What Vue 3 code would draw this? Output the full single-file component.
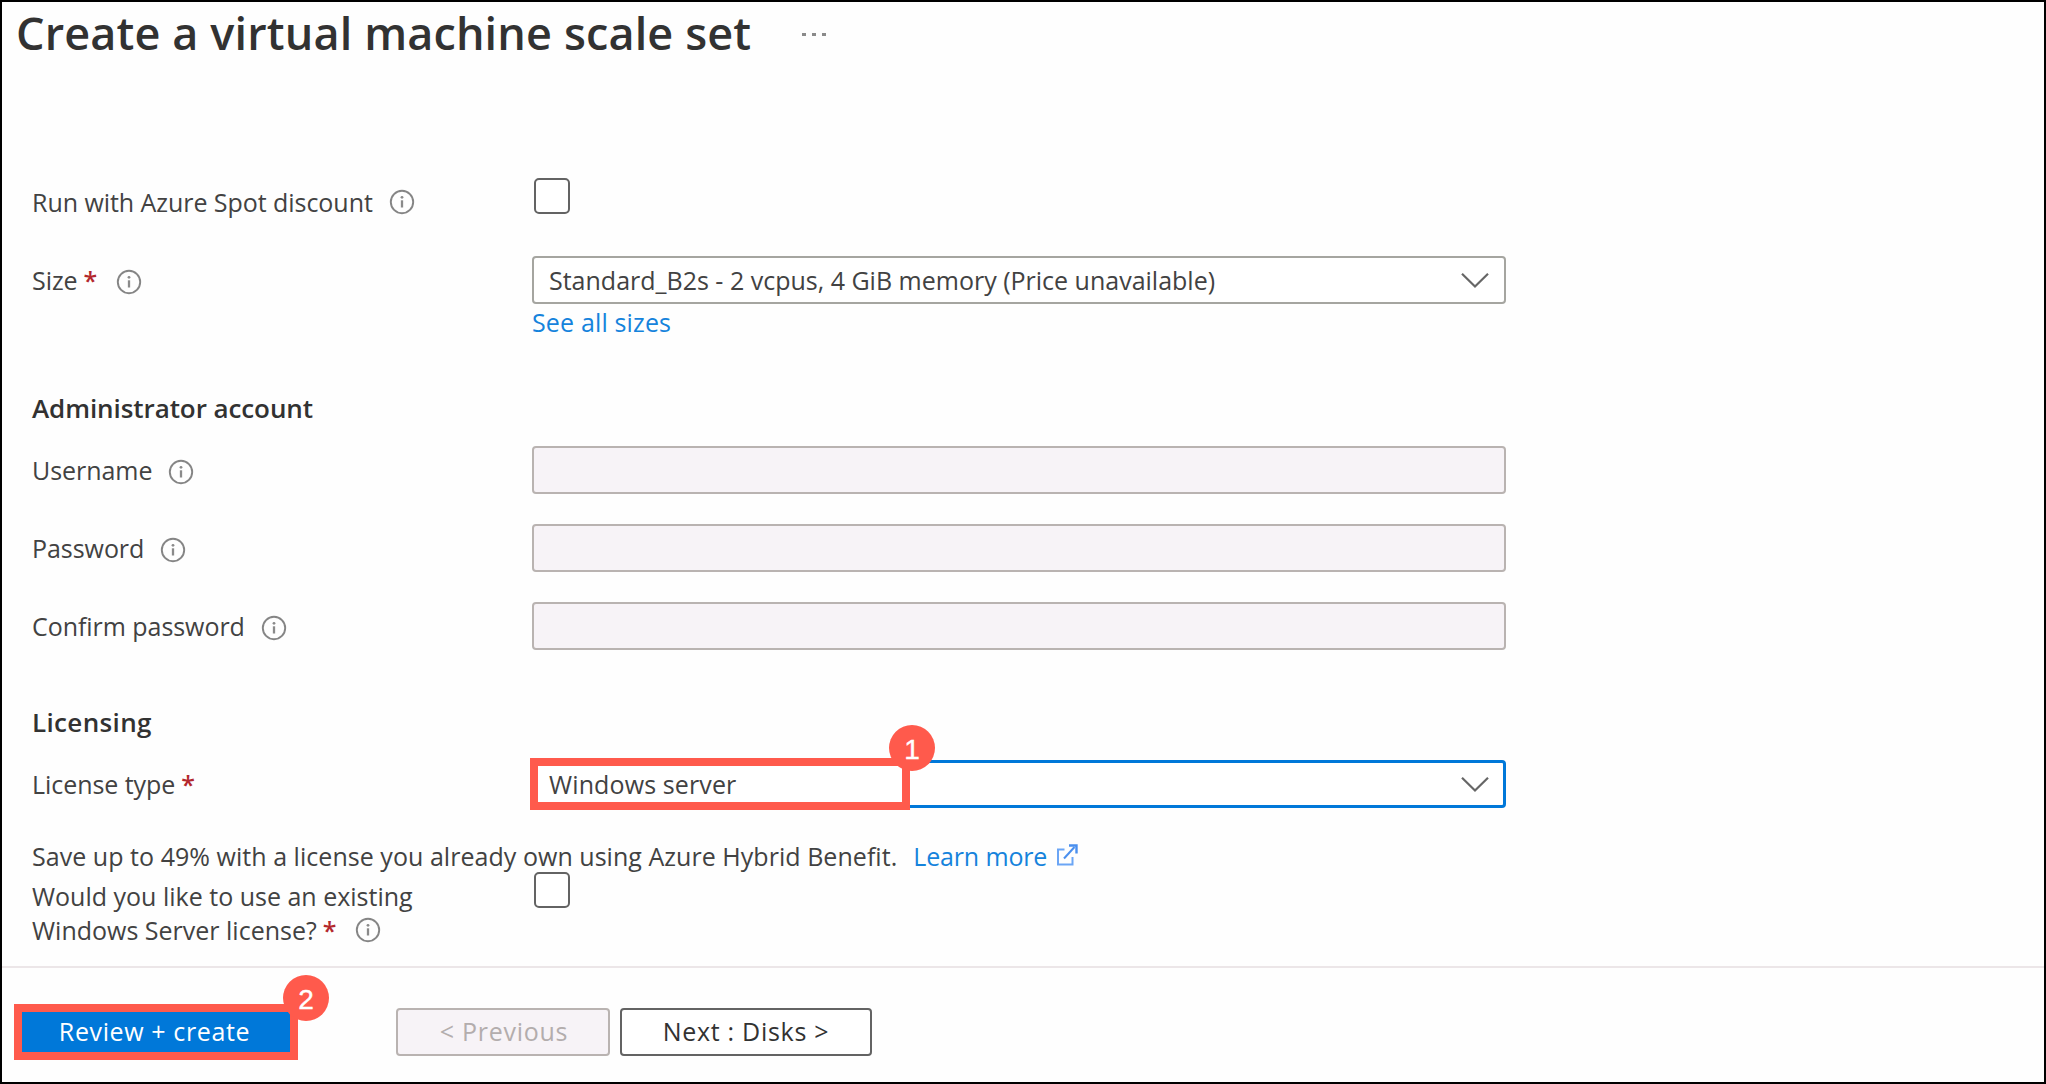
<script setup>
import { h } from 'vue'

const InfoIcon = () =>
  h('svg', { width: 26, height: 26, viewBox: '0 0 26 26', fill: 'none', style: 'display:block;flex:none' }, [
    h('circle', { cx: 13, cy: 13, r: 11.2, stroke: '#858585', 'stroke-width': 1.9 }),
    h('circle', { cx: 13, cy: 8.3, r: 1.4, fill: '#8a8a8a' }),
    h('path', { d: 'M13 11.3v7.2', stroke: '#8a8a8a', 'stroke-width': 2.3 }),
  ])

const Chevron = () =>
  h('svg', { width: 30, height: 18, viewBox: '0 0 30 18', fill: 'none', style: 'display:block;flex:none' }, [
    h('path', { d: 'M2 2.7 15 15.5 28 2.7', stroke: '#666', 'stroke-width': 2.2 }),
  ])

const credentials = ['Username', 'Password', 'Confirm password']
</script>

<template>
  <div class="page">
    <header class="header">
      <h1>Create a virtual machine scale set</h1>
      <div class="more"><i></i><i></i><i></i></div>
    </header>

    <main class="form">
      <div class="row spot">
        <div class="label"><span>Run with Azure Spot discount</span><InfoIcon class="info" /></div>
        <div class="checkbox"></div>
      </div>

      <div class="row size">
        <div class="label"><span>Size</span><span class="req">*</span><InfoIcon class="info low" /></div>
        <div class="field select">
          <span class="size-value">Standard_B2s - 2 vcpus, 4 GiB memory (Price unavailable)</span>
          <Chevron />
        </div>
      </div>
      <a class="see-all">See all sizes</a>

      <h2 class="admin">Administrator account</h2>
      <div v-for="name in credentials" :key="name" class="row credential">
        <div class="label"><span>{{ name }}</span><InfoIcon class="info low" /></div>
        <div class="field disabled"></div>
      </div>

      <h2 class="licensing">Licensing</h2>
      <div class="row license">
        <div class="label"><span>License type</span><span class="req">*</span></div>
        <div class="field select focused">
          <span class="license-value">Windows server</span>
          <Chevron />
          <div class="callout"></div>
          <div class="badge">1</div>
        </div>
      </div>

      <p class="benefit">
        <span>Save up to 49% with a license you already own using Azure Hybrid Benefit.</span>
        <a>Learn more</a>
        <svg width="22" height="24" viewBox="0 0 22 24" fill="none" stroke="#6ba5f5" stroke-width="2">
          <path d="M8.500 6.500H2v15h14.500V14" />
          <path d="M8 15.500 18.500 4" stroke="#4a8fee" />
          <path d="M13 2.500h7.500V10.500" stroke="#4a8fee" stroke-width="2.400" />
        </svg>
      </p>
      <div class="row existing">
        <div class="label question">
          <div class="line">Would you like to use an existing</div>
          <div class="line"><span>Windows Server license?</span><span class="req">*</span><InfoIcon class="info" /></div>
        </div>
        <div class="checkbox"></div>
      </div>
    </main>

    <footer class="footer">
      <div class="primary">
        <span>Review + create</span>
        <div class="badge">2</div>
      </div>
      <div class="button previous"><span>&lt; Previous</span></div>
      <div class="button next"><span>Next : Disks &gt;</span></div>
    </footer>
  </div>
</template>

<style>
body {
  margin: 0;
  background: #fff;
}
</style>

<style scoped>
.page {
  box-sizing: border-box;
  width: 2046px;
  height: 1084px;
  border: 2px solid #000;
  background: #fefefe;
  display: flex;
  flex-direction: column;
  overflow: hidden;
  font: 400 25px/34px "Open Sans", "Noto Sans", sans-serif;
  color: #424242;
  white-space: nowrap;
}
.header {
  box-sizing: border-box;
  height: 176px;
  flex: none;
  display: flex;
  align-items: flex-start;
  padding: 1px 0 0 14px;
}
h1 {
  margin: 0;
  width: 786px;
  font-size: 45px;
  line-height: 60px;
  font-weight: 600;
  letter-spacing: 0.13px;
  color: #323232;
}
.more {
  display: flex;
  gap: 6px;
  padding-top: 30px;
}
.more i {
  width: 4px;
  height: 3px;
  background: #8a8a8a;
}
.form {
  height: 788px;
  flex: none;
  padding-left: 30px;
  display: flex;
  flex-direction: column;
  align-items: flex-start;
}
.row {
  display: flex;
  height: 48px;
  flex: none;
}
.label {
  width: 500px;
  display: flex;
  align-items: center;
  flex: none;
  letter-spacing: -0.05px;
}
.info {
  margin-left: 16px;
}
.low {
  margin-top: 3px;
}
.req {
  margin-left: 6px;
  font-weight: 600;
  color: #b3282d;
  width: 15px;
}
.req + .info {
  margin-left: 17px;
}
.checkbox {
  box-sizing: border-box;
  width: 36px;
  height: 36px;
  margin-left: 2px;
  border: 2px solid #636363;
  border-radius: 5px;
  background: #fff;
}
.spot {
  margin-bottom: 30px;
}
.field {
  box-sizing: border-box;
  width: 974px;
  height: 48px;
  border: 2px solid #a5a5a0;
  border-radius: 4px;
  display: flex;
  align-items: center;
  justify-content: space-between;
  padding: 0 14px 0 15px;
  position: relative;
  background: #fff;
}
.disabled {
  background: #f7f3f7;
  border-color: #b9b3b1;
}
.size-value {
  letter-spacing: 0;
}
.see-all {
  margin: 1px 0 0 500px;
  letter-spacing: 0.15px;
}
a {
  color: #1583dc;
}
h2 {
  margin: 0;
  font-size: 26px;
  line-height: 34px;
  font-weight: 600;
  color: #323232;
}
.admin {
  margin: 52px 0 21px;
  letter-spacing: -0.08px;
}
.credential {
  margin-bottom: 30px;
}
.licensing {
  margin: 25px 0 21px;
  letter-spacing: 0.35px;
}
.focused {
  border: 3px solid #0078d9;
  padding: 0 13px 0 14px;
}
.license-value {
  letter-spacing: 0.12px;
}
.callout {
  position: absolute;
  box-sizing: border-box;
  left: -5px;
  top: -5px;
  width: 380px;
  height: 52px;
  border: 8px solid #ff5a4c;
}
.badge {
  position: absolute;
  width: 46px;
  height: 46px;
  border-radius: 50%;
  background: #ff5a4c;
  color: #fff;
  font: 400 28px/50px "Liberation Sans", Arial, sans-serif;
  -webkit-text-stroke: 0.4px #fff;
  text-align: center;
}
.focused .badge {
  left: 354px;
  top: -38px;
}
.benefit {
  margin: 31px 0 0;
  height: 33px;
  line-height: 34px;
  display: flex;
  align-items: center;
  letter-spacing: 0.04px;
}
.benefit a {
  margin-left: 16px;
  letter-spacing: -0.15px;
}
.benefit svg {
  margin: -2px 0 0 9px;
}
.existing {
  height: 76px;
}
.question {
  display: block;
  padding-top: 7px;
}
.line {
  height: 34px;
  display: flex;
  align-items: center;
  letter-spacing: 0;
}
.footer {
  flex: 1;
  border-top: 2px solid #ece6e8;
  display: flex;
  align-items: flex-start;
  padding: 36px 0 0 12px;
}
.primary,
.button {
  box-sizing: border-box;
  display: flex;
  align-items: center;
  justify-content: center;
  position: relative;
  letter-spacing: 0.72px;
}
.primary > span,
.button > span {
  padding-bottom: 2px;
}
.primary {
  width: 284px;
  height: 56px;
  border: 8px solid #ff5a4c;
  background: #0078d9;
  color: #fff;
  letter-spacing: 0.62px;
  padding-right: 3px;
}
.primary .badge {
  left: 261px;
  top: -37px;
  letter-spacing: 0;
}
.button {
  height: 48px;
  margin-top: 4px;
  border: 2px solid #b9b3b1;
  border-radius: 4px;
}
.previous {
  width: 214px;
  margin-left: 98px;
  padding-left: 2px;
  background: #f7f3f7;
  color: #b3adad;
}
.next {
  width: 252px;
  margin-left: 10px;
  border-color: #636363;
  color: #323232;
  background: #fff;
}
</style>
